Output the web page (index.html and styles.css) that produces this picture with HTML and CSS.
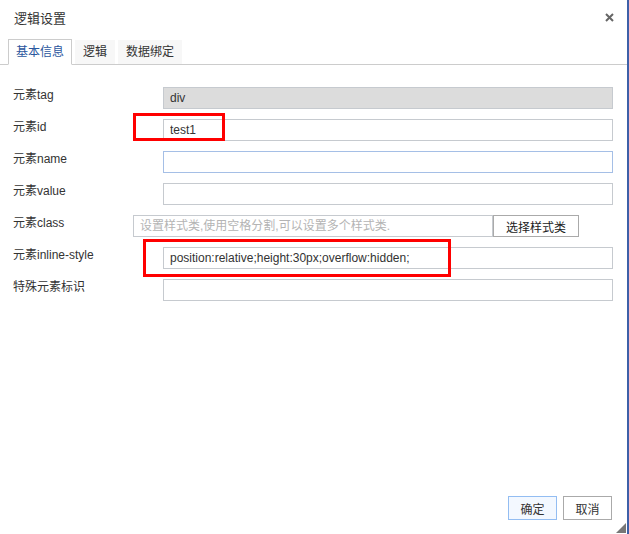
FILE: index.html
```html
<!DOCTYPE html>
<html lang="zh-CN">
    <head>
        <title>逻辑设置</title>
        <meta charset="utf-8">
        <meta name="viewport" content="width=device-width, initial-scale=1">
        <link rel="stylesheet" href="styles.css">
    </head>
    <body>

        <div class="dialog">
            <div class="title">
                <span>逻辑设置</span>
                <a href="javascript:void(0)" class="close">
                    <svg width="9" height="9" viewBox="0 0 9 9"><path d="M1 1L8 8M8 1L1 8" stroke="#666" stroke-width="2"/></svg>
                </a>
            </div>

            <ul class="tabs">
                <li class="active">基本信息</li>
                <li>逻辑</li>
                <li>数据绑定</li>
            </ul>

            <div class="form">
                <div class="row">
                    <label>元素tag</label>
                    <input type="text" class="readonly" value="div" readonly>
                </div>
                <div class="row">
                    <label>元素id</label>
                    <input type="text" value="test1">
                    <div class="mark mark-id"></div>
                </div>
                <div class="row">
                    <label>元素name</label>
                    <input type="text" class="focus">
                </div>
                <div class="row">
                    <label>元素value</label>
                    <input type="text">
                </div>
                <div class="row">
                    <label class="short">元素class</label>
                    <input type="text" class="short" placeholder="设置样式类,使用空格分割,可以设置多个样式类.">
                    <button type="button" class="pick">选择样式类</button>
                </div>
                <div class="row">
                    <label>元素inline-style</label>
                    <input type="text" value="position:relative;height:30px;overflow:hidden;">
                    <div class="mark mark-style"></div>
                </div>
                <div class="row">
                    <label>特殊元素标识</label>
                    <input type="text">
                </div>
            </div>

            <div class="footer">
                <button type="button" class="btn primary">确定</button>
                <button type="button" class="btn">取消</button>
            </div>

            <div class="resize"></div>
        </div>

    </body>
</html>
```

FILE: styles.css
```css
* {
    box-sizing: border-box;
}
body {
    margin: 0;
    font-family: "Liberation Sans", Arial, "Noto Sans CJK SC", sans-serif;
    font-size: 12px;
    color: #333;
    background: #fff;
}
.dialog {
    position: relative;
    width: 629px;
    height: 534px;
    border-right: 2px solid #3d60a8;
    display: flex;
    flex-direction: column;
}
/* Title bar */
.title {
    height: 34px;
    padding: 0 14px 0 14px;
    display: flex;
    align-items: center;
    justify-content: space-between;
    font-size: 13px;
    color: #333;
    padding-top: 1px;
}
.close {
    display: block;
    width: 9px;
    height: 9px;
    line-height: 0;
    margin-right: -1px;
}
/* Tabs */
.tabs {
    list-style-type: none;
    margin: 0;
    padding: 5px 0 0 8px;
    display: flex;
    gap: 3px;
    border-bottom: 1px solid #ccc;
}
.tabs li {
    height: 24px;
    margin-top: 1px;
    padding: 0 8px;
    line-height: 24px;
    background-color: #f7f7f7;
    color: #333;
}
.tabs li.active {
    height: 26px;
    margin-top: 0;
    margin-bottom: -1px;
    padding: 0 7px;
    line-height: 24px;
    background-color: #fff;
    border: 1px solid #ccc;
    border-bottom-color: #fff;
    color: #2b579e;
}
/* Form rows */
.form {
    padding: 22px 14px 0 13px;
    display: flex;
    flex-direction: column;
    gap: 10px;
}
.row {
    position: relative;
    display: flex;
    align-items: flex-start;
}
.row label {
    width: 150px;
    flex: none;
    line-height: 16px;
    color: #333;
}
.row label.short {
    width: 120px;
}
input[type=text] {
    width: 450px;
    height: 22px;
    padding: 0 6px;
    border: 1px solid #c6cacf;
    font-family: inherit;
    font-size: 12px;
    color: #333;
    outline: none;
}
input[type=text].short {
    width: 360px;
}
input[type=text].readonly {
    background-color: #dcdcdc;
}
input[type=text].focus {
    border-color: #a5bfe6;
}
input::placeholder {
    color: #b4b4b4;
}
.pick {
    width: 86px;
    height: 22px;
    padding: 0;
    border: 1px solid #aaa;
    background-color: #fff;
    font-family: inherit;
    font-size: 12px;
    color: #222;
}
/* Red highlight frames */
.mark {
    position: absolute;
    border: 3px solid #f00;
}
.mark-id {
    left: 120px;
    top: -6px;
    width: 92px;
    height: 28px;
}
.mark-style {
    left: 130px;
    top: -8px;
    width: 308px;
    height: 38px;
}
/* Footer buttons */
.footer {
    margin-top: auto;
    padding: 0 15px 14px 0;
    display: flex;
    justify-content: flex-end;
    gap: 6px;
}
.btn {
    width: 49px;
    height: 24px;
    padding: 0;
    border: 1px solid #aaa;
    background-color: #fff;
    font-family: inherit;
    font-size: 12px;
    color: #333;
}
.btn.primary {
    border-color: #93bdf2;
    background-color: #f3f8ff;
}
.resize {
    position: absolute;
    right: 1px;
    bottom: 1px;
    width: 0;
    height: 0;
    border-left: 10px solid transparent;
    border-bottom: 10px solid #777;
}
```
